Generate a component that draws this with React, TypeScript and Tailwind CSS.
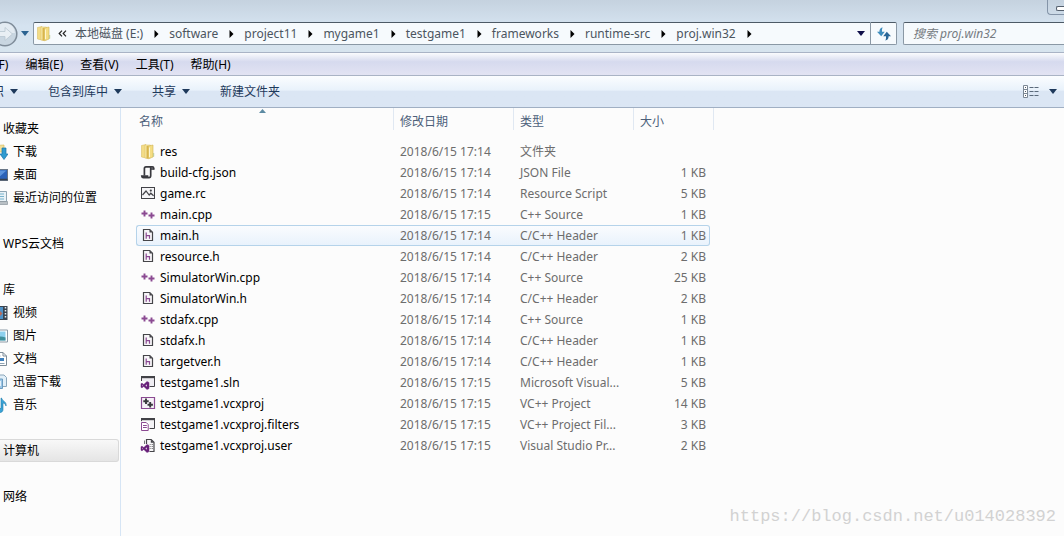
import type { ReactNode } from 'react';

type FileKind = 'folder' | 'json' | 'rc' | 'cpp' | 'h' | 'sln' | 'vcxproj' | 'filters' | 'user';

interface FileEntry {
  name: string;
  date: string;
  type: string;
  size: string;
  kind: FileKind;
}

const FILES: FileEntry[] = [
  { name: 'res', date: '2018/6/15 17:14', type: '文件夹', size: '', kind: 'folder' },
  { name: 'build-cfg.json', date: '2018/6/15 17:14', type: 'JSON File', size: '1 KB', kind: 'json' },
  { name: 'game.rc', date: '2018/6/15 17:14', type: 'Resource Script', size: '5 KB', kind: 'rc' },
  { name: 'main.cpp', date: '2018/6/15 17:15', type: 'C++ Source', size: '1 KB', kind: 'cpp' },
  { name: 'main.h', date: '2018/6/15 17:14', type: 'C/C++ Header', size: '1 KB', kind: 'h' },
  { name: 'resource.h', date: '2018/6/15 17:14', type: 'C/C++ Header', size: '2 KB', kind: 'h' },
  { name: 'SimulatorWin.cpp', date: '2018/6/15 17:14', type: 'C++ Source', size: '25 KB', kind: 'cpp' },
  { name: 'SimulatorWin.h', date: '2018/6/15 17:14', type: 'C/C++ Header', size: '2 KB', kind: 'h' },
  { name: 'stdafx.cpp', date: '2018/6/15 17:14', type: 'C++ Source', size: '1 KB', kind: 'cpp' },
  { name: 'stdafx.h', date: '2018/6/15 17:14', type: 'C/C++ Header', size: '1 KB', kind: 'h' },
  { name: 'targetver.h', date: '2018/6/15 17:14', type: 'C/C++ Header', size: '1 KB', kind: 'h' },
  { name: 'testgame1.sln', date: '2018/6/15 17:15', type: 'Microsoft Visual...', size: '5 KB', kind: 'sln' },
  { name: 'testgame1.vcxproj', date: '2018/6/15 17:15', type: 'VC++ Project', size: '14 KB', kind: 'vcxproj' },
  { name: 'testgame1.vcxproj.filters', date: '2018/6/15 17:15', type: 'VC++ Project Fil...', size: '3 KB', kind: 'filters' },
  { name: 'testgame1.vcxproj.user', date: '2018/6/15 17:15', type: 'Visual Studio Pr...', size: '2 KB', kind: 'user' },
];

const CRUMBS = ['本地磁盘 (E:)', 'software', 'project11', 'mygame1', 'testgame1', 'frameworks', 'runtime-src', 'proj.win32'];

function Svg({ children }: { children: ReactNode }) {
  return (
    <svg viewBox="0 0 16 16" className="size-4 shrink-0" aria-hidden="true">
      {children}
    </svg>
  );
}

function FolderIcon() {
  return (
    <Svg>
      <path d="M1.500 1.500 6 .5v13.500l-4.500-1z" fill="#f3dc86" stroke="#dcc167" strokeWidth=".6" />
      <path d="M5 1h5.500v13H5z" fill="#f8eaa9" stroke="#d9be62" strokeWidth=".5" />
      <path d="M6.500 2 8.500 1.500V14.500l-2 .5z" fill="#d9b54c" />
      <path d="M8.500 2 13 1v12l-4.500 1.800z" fill="#f4dd83" stroke="#d2b352" strokeWidth=".6" />
      <path d="M9.500 3.500v9.500" stroke="#fff6cf" strokeWidth="1" />
      <path d="M13 9h1.200v3.500L13 13z" fill="#c3cf9a" />
    </Svg>
  );
}

function VsMark() {
  return (
    <g transform="translate(.5 -1.500)">
      <path d="M0 7.500h9V16H0z" fill="#fcfcfc" />
      <path
        d="M6.500 8 8.500 8.900v6.200L6.500 16 3.300 12.900 1.500 14.300.5 13.800v-3.600l1-.5 1.800 1.400zM6.500 10.400 4.700 12l1.800 1.600zM1.500 11v2l1-1z"
        fill="#68217a"
        stroke="#68217a"
        strokeWidth=".5"
        fillRule="evenodd"
      />
    </g>
  );
}

function FileIcon({ kind }: { kind: FileKind }) {
  switch (kind) {
    case 'folder':
      return <FolderIcon />;
    case 'json':
      return (
        <Svg>
          <path d="M13.600 4.500V3.200c0-.9-.4-1.400-1.300-1.400H6C4.900 1.800 4.400 2.400 4.400 3.500v7" fill="none" stroke="#3a3a3f" strokeWidth="1.700" />
          <path d="M10.700 2v8.500c0 1.500-.6 2.200-1.700 2.200H3.400c-.9 0-1.500-.5-1.600-1.600h5.700c.1 1 .5 1.600 1.300 1.600" fill="none" stroke="#3a3a3f" strokeWidth="1.700" />
          <path d="M10.700 4h3.700" stroke="#3a3a3f" strokeWidth="1.500" />
        </Svg>
      );
    case 'rc':
      return (
        <Svg>
          <rect x="1.500" y="1.500" width="13" height="11" fill="#f5f5f7" stroke="#424247" />
          <path d="m2.500 9 3.500-4 3.200 4 1.600-1.800 2.800 2.600" fill="none" stroke="#424247" strokeWidth="1.200" />
          <circle cx="10.800" cy="4.600" r="1.100" fill="#424247" />
        </Svg>
      );
    case 'cpp':
      return (
        <Svg>
          <path d="M4.500 3.500v6M1.500 6.500h6M11.500 5.500v6M8.500 8.500h6" stroke="#8b4a92" strokeWidth="1.900" />
        </Svg>
      );
    case 'h':
      return (
        <Svg>
          <path d="M3.500 1.500h6.300l2.700 2.700v8.300h-9z" fill="#f7f5f8" stroke="#454549" strokeWidth="1.200" />
          <path d="M9.500 1.500v3h3z" fill="#454549" />
          <path d="M6.200 4.500v6.200M6.200 7.700h3.300v3" fill="none" stroke="#8b4a92" strokeWidth="1.200" />
        </Svg>
      );
    case 'sln':
      return (
        <Svg>
          <path d="M1.500 1.500h13v10h-13z" fill="#efedf2" stroke="#424247" />
          <path d="M1 1h14v2.200H1z" fill="#424247" />
          <VsMark />
        </Svg>
      );
    case 'vcxproj':
      return (
        <Svg>
          <path d="M1.500 1.500h13v11h-13z" fill="#f6f1f7" stroke="#8b4a92" strokeWidth="1.200" />
          <path d="M6 2.500v5.400M3.300 5.200h5.400M10.200 6v5.400M7.500 8.700h5.400" stroke="#38383c" strokeWidth="1.900" />
        </Svg>
      );
    case 'filters':
      return (
        <Svg>
          <path d="M1.500 1.500h13v10h-13z" fill="#f4f3f6" stroke="#424247" />
          <path d="M1 1h14v2.200H1z" fill="#424247" />
          <path d="M0 4.200h9.500V15H0z" fill="#fcfcfc" />
          <path d="M1.500 5.500h4.700l2 2v6H1.500z" fill="#fff" stroke="#8b4a92" />
          <path d="M3 8.500h3.800M3 10.500h3.800" stroke="#8b4a92" />
        </Svg>
      );
    case 'user':
      return (
        <Svg>
          <path d="M6.500 1.500h4.700l2.800 2.800v9.200H6.500z" fill="#f7f6f8" stroke="#454549" strokeWidth="1.200" />
          <path d="M10.800 1.500v3.200H14z" fill="#454549" />
          <path d="M9.500 6.500h1M9.500 8.500h1M9.500 10.500h1M11.700 6.500h1M11.700 8.500h1M11.700 10.500h1" stroke="#555" />
          <path d="M4.500 2.500v4" stroke="#77777b" />
          <VsMark />
        </Svg>
      );
  }
}

function DownloadIcon() {
  return (
    <Svg>
      <path d="M4 1.500 12 1v7H4z" fill="#f3e09a" stroke="#d8bd62" strokeWidth=".7" />
      <path d="M10 4h4v6h2l-4 5.500L8 10h2z" fill="#2f9bd0" stroke="#1b74a8" strokeWidth=".7" />
    </Svg>
  );
}

function DesktopIcon() {
  return (
    <Svg>
      <rect x="1" y="2.500" width="14.500" height="11" fill="#2b62b8" stroke="#6a7686" />
      <path d="M2 3.500h12.500L6 11H2z" fill="#5b93dc" />
      <path d="M1 12.500h14.500" stroke="#37414e" strokeWidth="1.500" />
    </Svg>
  );
}

function RecentIcon() {
  return (
    <Svg>
      <path d="M3 1.500h11.500v10H3z" fill="#e9f2f7" stroke="#8ea5b3" />
      <path d="M5 4h7M5 6.500h7M5 9h7" stroke="#77b3cd" />
      <path d="M4 11.500h11.500v3H4z" fill="#b9c0c5" stroke="#8d979e" strokeWidth=".7" />
    </Svg>
  );
}

function VideoIcon() {
  return (
    <Svg>
      <path d="M1 1h14.500v14H1z" fill="#3b4450" />
      <path d="M2 2h9v12H2z" fill="#4d92c8" />
      <path d="m7 5 3.500 3.500L7 12z" fill="#b86a5a" />
      <path d="M13.500 2v12" stroke="#e8eef2" strokeWidth="1.500" strokeDasharray="1.500 1.500" />
    </Svg>
  );
}

function PictureIcon() {
  return (
    <Svg>
      <path d="M1 2h14.500v12H1z" fill="#fff" stroke="#8d9aa6" />
      <path d="M2.500 3.500h11v9h-11z" fill="#8dd0ee" />
      <path d="M2.500 10c4-2 7-2 11-.5v3h-11z" fill="#3f8f9b" />
    </Svg>
  );
}

function DocumentIcon() {
  return (
    <Svg>
      <path d="M2.500 1.500h8.500l3.500 3.500v9.500h-12z" fill="#fff" stroke="#7f8d99" />
      <path d="M11 1.500V5h3.500" fill="none" stroke="#7f8d99" />
      <path d="M8 7h4v3H8z" fill="#3d7fbd" />
      <path d="M4.500 5h4M4.500 12.500h8" stroke="#8fa3b3" />
    </Svg>
  );
}

function ThunderIcon() {
  return (
    <Svg>
      <path d="M5.500 1h6.500l2.500 2.500v9h-9z" fill="#e2eff8" stroke="#8aa6ba" />
      <path d="M2.500 5h8v9.500h-8z" fill="#9cc6e6" stroke="#6c9cc0" />
      <path d="M8 7v5" stroke="#fff" strokeWidth="1.500" />
    </Svg>
  );
}

function MusicIcon() {
  return (
    <Svg>
      <path d="M9.500 1c.5 3 5.500 3.500 4.500 8-.4-2-1.800-2.800-3-3v6.500c0 2-1.500 3.200-3.700 3.200-1.600 0-2.500-.8-2.500-2 0-1.700 2-2.800 4.200-2.200V1z" fill="#3aa3d6" stroke="#1f7cab" strokeWidth=".6" />
    </Svg>
  );
}

interface NavEntry {
  label: string;
  icon?: ReactNode;
  current?: boolean;
}

const NAV: NavEntry[][] = [
  [
    { label: '收藏夹' },
    { label: '下载', icon: <DownloadIcon /> },
    { label: '桌面', icon: <DesktopIcon /> },
    { label: '最近访问的位置', icon: <RecentIcon /> },
  ],
  [{ label: 'WPS云文档' }],
  [
    { label: '库' },
    { label: '视频', icon: <VideoIcon /> },
    { label: '图片', icon: <PictureIcon /> },
    { label: '文档', icon: <DocumentIcon /> },
    { label: '迅雷下载', icon: <ThunderIcon /> },
    { label: '音乐', icon: <MusicIcon /> },
  ],
  [{ label: '计算机', current: true }],
  [{ label: '网络' }],
];

function DownArrow({ className = 'text-[#1e395b]' }: { className?: string }) {
  return (
    <svg viewBox="0 0 8 5" className={`h-[5px] w-2 shrink-0 ${className}`} aria-hidden="true">
      <path d="M0 0h8L4 5z" fill="currentColor" />
    </svg>
  );
}

function AddressBar() {
  return (
    <div className="flex h-[30px] items-start">
      <div className="flex h-[23px] w-[33px] shrink-0 items-center gap-[3px]">
        <button aria-label="前进" className="-ml-2 size-[26px] shrink-0">
          <svg viewBox="0 0 26 26" className="size-[26px]" aria-hidden="true">
            <circle cx="13" cy="13" r="11.800" fill="#c9d6e1" stroke="#7f8c99" strokeWidth="1.500" />
            <path d="M3 12a10 10 0 0 1 20 0z" fill="#e3ebf2" />
            <path d="M6 10.500h7V6.500l7.500 6.500-7.500 6.500v-4H6z" fill="#e9eff4" stroke="#b9c6d1" strokeWidth=".8" />
          </svg>
        </button>
        <button aria-label="最近的页面">
          <DownArrow className="text-[#2b6391]" />
        </button>
      </div>
      <nav aria-label="地址" className="flex h-[23px] min-w-0 flex-1 items-center rounded-l-xs border border-[#8a98a5] border-t-[#4d5a66] bg-[#f6fafd] pl-[2px] text-[#4b555f]">
        <FolderIcon />
        <button aria-label="上级文件夹" className="ml-1.5 mr-2 w-[9px] text-[#222]">
          <svg viewBox="0 0 9 7" className="h-[7px] w-[9px]" aria-hidden="true">
            <path d="M4 .7 1.200 3.500 4 6.300M8 .7 5.200 3.500 8 6.300" fill="none" stroke="currentColor" strokeWidth="1.200" />
          </svg>
        </button>
        <ol className="flex items-center">
          {CRUMBS.map((crumb) => (
            <li key={crumb} className="flex items-center whitespace-nowrap">
              <button className="h-5">{crumb}</button>
              <svg viewBox="0 0 4 8" className="ml-[11px] mr-2.5 h-2 w-[5px]" aria-hidden="true">
                <path d="M0 0v8l4-4z" fill="#000" />
              </svg>
            </li>
          ))}
        </ol>
        <button aria-label="以前的位置" className="ml-auto mr-[5px]">
          <DownArrow className="text-[#10104a]" />
        </button>
      </nav>
      <button aria-label="刷新" className="flex h-[23px] w-[26px] shrink-0 items-center justify-center rounded-r-xs border border-l-0 border-[#8a98a5] border-t-[#4d5a66] bg-[#f6fafd]">
        <svg viewBox="0 0 16 14" className="h-3.5 w-4" aria-hidden="true">
          <path d="M6.800.6C4.500.8 3.400 2.200 3.400 4.800H1l4.200 4.400 3.600-4.400H6C5.900 2.800 6 1.500 6.800.6z" fill="#3f8dbd" />
          <path d="M9.200 13.400c2.300-.2 3.400-1.600 3.400-4.200H15l-4.200-4.400-3.600 4.400H10c.1 2 0 3.300-.8 4.200z" fill="#2b6798" />
        </svg>
      </button>
      <input
        type="search"
        aria-label="搜索 proj.win32"
        placeholder="搜索 proj.win32"
        className="ml-1.5 h-[23px] w-[161px] shrink-0 rounded-l-xs border border-r-0 border-[#8a98a5] border-t-[#4d5a66] bg-[#f6fafd] px-[9px] italic outline-none placeholder:text-[#757b81]"
      />
    </div>
  );
}

function ToolButton({ label, arrow = true }: { label: string; arrow?: boolean }) {
  return (
    <button className="flex items-center gap-1.5 whitespace-nowrap">
      {label}
      {arrow && <DownArrow />}
    </button>
  );
}

function FileTable() {
  return (
    <table className="table-fixed border-separate border-spacing-0 text-left">
      <colgroup>
        <col className="w-[258px]" />
        <col className="w-[120px]" />
        <col className="w-[120px]" />
        <col className="w-[76px]" />
        <col className="w-1" />
      </colgroup>
      <thead className="text-[#4c607a]">
        <tr className="h-[33px] align-top">
          <th className="p-0 font-normal">
            <div className="relative h-[22px] border-r border-[#e0e8f2] pl-[3px] pt-1.5 leading-4">
              名称
              <svg viewBox="0 0 7 4" className="absolute left-1/2 top-px -ml-1.5 h-1 w-[7px]" aria-hidden="true">
                <path d="M0 4h7L3.500 0z" fill="#5d8ba3" />
              </svg>
            </div>
          </th>
          <th className="p-0 font-normal">
            <div className="h-[22px] border-r border-[#e0e8f2] pl-1.5 pt-1.5 leading-4">修改日期</div>
          </th>
          <th className="p-0 font-normal">
            <div className="h-[22px] border-r border-[#e0e8f2] pl-1.5 pt-1.5 leading-4">类型</div>
          </th>
          <th className="p-0 font-normal">
            <div className="h-[22px] pl-1.5 pt-1.5 leading-4">大小</div>
          </th>
          <td className="p-0">
            <div className="h-[22px] border-r border-[#e0e8f2]" />
          </td>
        </tr>
      </thead>
      <tbody className="text-[#6d6d6d]">
        {FILES.map((file) => {
          const active = file.name === 'main.h';
          const cell = active
            ? 'h-[21px] border-y border-[#b5d3ea] bg-linear-to-b from-[#fafcfe] to-[#e9f2fc] py-0 leading-4'
            : 'h-[21px] border-y border-transparent py-0 leading-4';
          return (
            <tr key={file.name} className="whitespace-nowrap">
              <td className={`${cell} rounded-l-[3px] border-l pl-[3px] pr-0 text-black`}>
                <div className="flex items-center gap-1">
                  <FileIcon kind={file.kind} />
                  {file.name}
                </div>
              </td>
              <td className={`${cell} pl-1.5 pr-0`}>{file.date}</td>
              <td className={`${cell} pl-1.5 pr-0`}>{file.type}</td>
              <td className={`${cell} rounded-r-[3px] border-r pl-0 pr-[3px] text-right`}>{file.size}</td>
              <td className="p-0" />
            </tr>
          );
        })}
      </tbody>
    </table>
  );
}

export default function App() {
  return (
    <div className="relative flex min-h-screen flex-col overflow-hidden bg-[#fcfcfc] font-['Noto_Sans','Noto_Sans_CJK_SC',sans-serif] text-[12px] leading-4 text-black">
      <header className="bg-linear-to-b from-[#c5d2df] via-[#d5e3f0] to-[#d7e4ee]">
        <div className="flex h-[22px] justify-end">
          <button aria-label="最小化" className="flex h-[15px] w-[17px] items-end rounded-bl-sm border border-r-0 border-t-0 border-[#8494a8] pb-[3px] pl-2">
            <span className="h-[5px] w-2 rounded-l-xs border border-r-0 border-[#55606e] bg-white" />
          </button>
        </div>
        <AddressBar />
      </header>

      <div role="menubar" className="flex h-6 items-center gap-[17px] whitespace-nowrap border-y border-[#a9b3c5] bg-linear-to-b from-[#fafbfd] from-0% via-[#d6daee] via-40% to-[#e2e3f3] pt-0.5">
        <button role="menuitem" className="-ml-[29px]">文件(F)</button>
        <button role="menuitem">编辑(E)</button>
        <button role="menuitem">查看(V)</button>
        <button role="menuitem">工具(T)</button>
        <button role="menuitem">帮助(H)</button>
      </div>

      <div role="toolbar" className="flex h-8 items-center border-b border-[#a0afc3] bg-linear-to-b from-[#fbfdff] from-0% via-[#e9f2fb] via-45% to-[#dbe6f4] to-50% text-[#1e395b]">
        <div className="-ml-5 flex gap-[30px]">
          <ToolButton label="组织" />
          <ToolButton label="包含到库中" />
          <ToolButton label="共享" />
          <ToolButton label="新建文件夹" arrow={false} />
        </div>
        <div className="ml-auto mr-[7px] flex items-center gap-2.5">
          <button aria-label="更改视图">
            <svg viewBox="0 0 16 13" className="h-[13px] w-4" aria-hidden="true">
              <path d="M.5.500h4v12h-4zM.5 4.500h4M.5 8.500h4" fill="#fff" stroke="#7b8794" />
              <path d="M2 2.500h1M2 6.500h1M2 10.500h1" stroke="#4f5b68" />
              <path d="M6.500 2.500h4M11.500 2.500h4M6.500 6.500h4M11.500 6.500h4M6.500 10.500h4M11.500 10.500h4" stroke="#5b6a7b" />
            </svg>
          </button>
          <button aria-label="更多选项">
            <DownArrow />
          </button>
        </div>
      </div>

      <div className="flex flex-1">
        <nav aria-label="文件夹" className="flex w-[121px] shrink-0 flex-col gap-[23px] border-r border-[#d6e5f5] pr-px pt-[9px]">
          {NAV.map((group) => (
            <ul key={group[0].label}>
              {group.map((item) => (
                <li key={item.label}>
                  <a
                    href="#"
                    aria-current={item.current ? 'true' : undefined}
                    className={
                      item.current
                        ? 'flex h-[23px] items-center rounded-r-[3px] border border-l-0 border-[#d9d9d9] bg-linear-to-b from-[#f8f8f8] to-[#e5e5e5] pl-[3px]'
                        : item.icon
                          ? '-ml-2 flex h-[23px] items-center gap-[5px] whitespace-nowrap'
                          : 'flex h-[23px] items-center pl-[3px]'
                    }
                  >
                    {item.icon}
                    {item.label}
                  </a>
                </li>
              ))}
            </ul>
          ))}
        </nav>
        <main className="min-w-0 flex-1 pl-[15px]">
          <FileTable />
        </main>
      </div>

      <p className="absolute bottom-[7px] right-2 font-['Liberation_Mono',monospace] text-[17px] leading-6 text-[#d2d2d2]">
        https://blog.csdn.net/u014028392
      </p>
    </div>
  );
}
